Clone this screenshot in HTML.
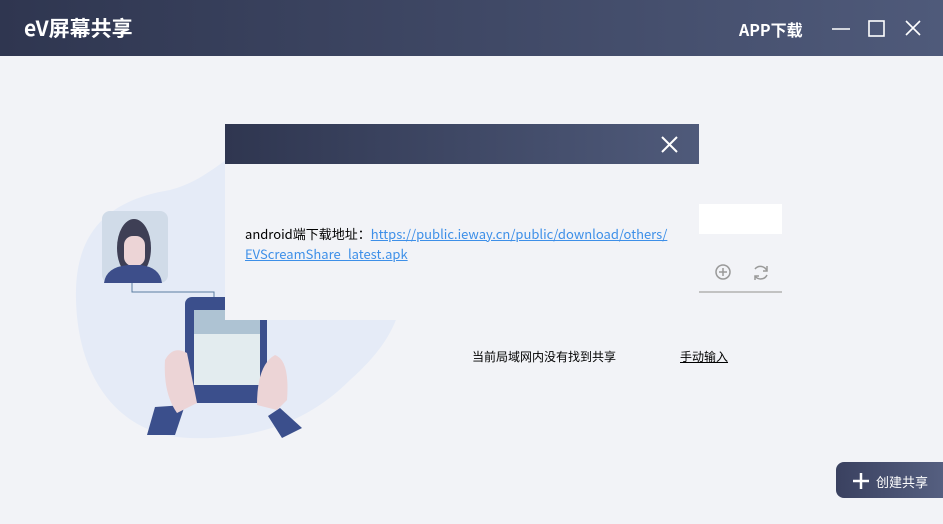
<!DOCTYPE html>
<html><head><meta charset="utf-8"><style>
body{margin:0;width:943px;height:524px;overflow:hidden;background:#f2f3f7;font-family:"Liberation Sans","Noto Sans CJK SC",sans-serif;position:relative}
.top{position:absolute;left:0;top:0;width:943px;height:56px;background:linear-gradient(90deg,#2f3650,#4f5a7a)}
.abs{position:absolute}
</style></head><body>
<div class="top"></div>
<div class="abs" style="left:24px;top:13px;color:#fff;font-size:21px;font-weight:bold;font-family:'Noto Sans CJK SC',sans-serif">eV屏幕共享</div>
<div class="abs" style="left:739px;top:17px;color:#fff;font-size:16px;font-weight:bold;font-family:'Noto Sans CJK SC',sans-serif">APP下载</div>
<svg class="abs" style="left:830px;top:18px" width="100" height="22"><g stroke="#fff" stroke-width="1.6" fill="none"><path d="M2 11H20"/><rect x="39" y="3" width="15" height="15"/><path d="M76 3L90 17M90 3L76 17"/></g></svg>

<svg class="abs" style="left:0;top:0" width="943" height="524">
<path d="M76 300C74 230 110 200 170 190C210 180 230 150 260 142C320 130 370 170 395 240C415 300 395 340 350 380C310 420 260 440 190 438C120 436 78 380 76 300Z" fill="#e5ebf7"/>
<rect x="102" y="211" width="66" height="72" rx="8" fill="#d0dbe8"/>
<ellipse cx="134" cy="248" rx="17" ry="29" fill="#3e3f55"/>
<rect x="124" y="236" width="21" height="30" rx="9" fill="#ecd4d6"/>
<path d="M104 283Q106 267 128 265L140 265Q160 267 162 283Z" fill="#3d4e8a"/>
<path d="M132 283V292H214V298" stroke="#5a7da0" fill="none"/>
<rect x="185" y="297" width="82" height="106" rx="7" fill="#3b4f8c"/>
<rect x="194" y="310" width="66" height="75" fill="#e3ecef"/>
<rect x="194" y="310" width="66" height="24" fill="#aec3d3"/>
<path d="M185 405l-10 30h-28l8-28zM280 408l22 20-20 10-14-22z" fill="#3b4f8c"/>
<path d="M165 360q8-15 22-7l10 50-20 10q-14-20-12-53zM275 355q15 5 12 45l-10 10-20-5q0-40 18-50z" fill="#ecd4d6"/>
</svg>

<div class="abs" style="left:225px;top:124px;width:474px;height:40px;background:linear-gradient(90deg,#2f3650,#4f5a7a)"></div>
<svg class="abs" style="left:660px;top:135px" width="20" height="20"><path d="M2 2L17 17M17 2L2 17" stroke="#fff" stroke-width="2"/></svg>
<div class="abs" style="left:225px;top:164px;width:474px;height:156px;background:#f2f3f7"></div>
<div class="abs" style="left:245px;top:224px;font-size:13px;line-height:20px;color:#000;font-family:'Noto Sans CJK SC',sans-serif">android端下载地址：<span style="color:#3d8fe8;text-decoration:underline">https://public.ieway.cn/public/download/others/</span><br><span style="color:#3d8fe8;text-decoration:underline">EVScreamShare_latest.apk</span></div>

<div class="abs" style="left:699px;top:204px;width:83px;height:30px;background:#fff"></div>
<svg class="abs" style="left:699px;top:260px" width="84" height="34"><g stroke="#999" stroke-width="1.5" fill="none"><circle cx="24" cy="12" r="7"/><path d="M24 8v8M20 12h8"/><path d="M56 9a7 7 0 0 1 12 2M68 15a7 7 0 0 1-12 1"/><path d="M68 6v5h-4M56 20v-4h4"/></g><path d="M0 32H83" stroke="#c2c2c2" stroke-width="2"/></svg>

<div class="abs" style="left:472px;top:348px;font-size:12px;color:#000">当前局域网内没有找到共享</div>
<div class="abs" style="left:680px;top:348px;font-size:12px;color:#000;text-decoration:underline">手动输入</div>

<div class="abs" style="left:836px;top:462px;width:107px;height:36px;border-radius:8px 0 0 8px;background:linear-gradient(90deg,#3a4160,#555f80)"></div>
<svg class="abs" style="left:852px;top:472px" width="18" height="18"><path d="M9 1v16M1 9h16" stroke="#fff" stroke-width="2.5"/></svg>
<div class="abs" style="left:876px;top:472px;font-size:13px;color:#fff">创建共享</div>
</body></html>
